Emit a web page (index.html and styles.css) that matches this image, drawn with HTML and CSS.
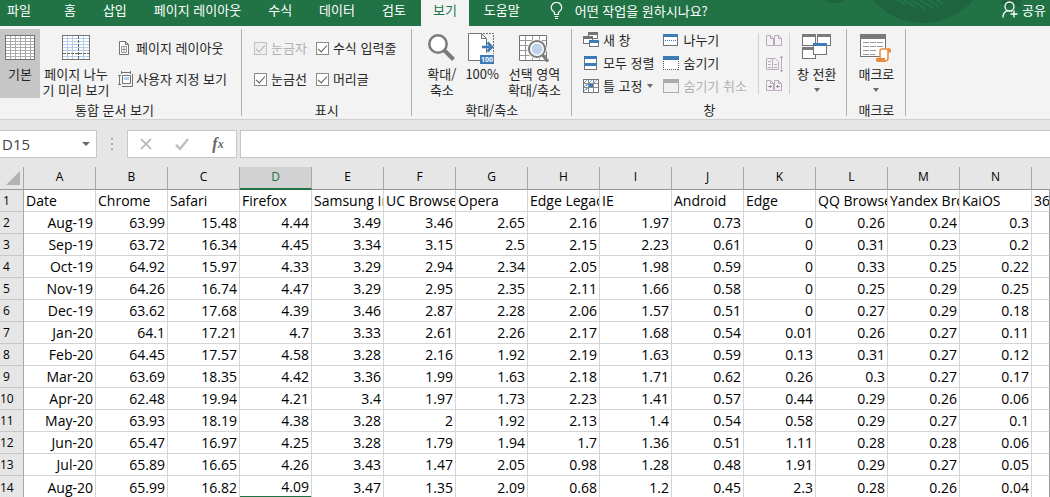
FILE: index.html
```html
<!DOCTYPE html>
<html lang="ko">
<head>
<meta charset="utf-8">
<title>보기</title>
<link rel="stylesheet" href="styles.css">
</head>
<body>
<header class="tabbar">
  <svg class="tabbar-art" width="250" height="26" viewBox="0 0 250 26" aria-hidden="true">
    <g fill="#1e643e"><circle cx="34" cy="-15" r="18"/><circle cx="123" cy="-43" r="66"/><path d="M199 3l4-3h20l-4 3 3 3-4 2-5-5-6 4z"/></g>
    <path d="M97 0l9 4M104 0l11 7M111 0l15 9M120 0l13 8M129 0l9 6M137 0l6 4" stroke="#217346" stroke-width="2.500"/>
  </svg>
  <nav class="tabs">
    <button class="tab first">파일</button>
    <button class="tab">홈</button>
    <button class="tab">삽입</button>
    <button class="tab">페이지 레이아웃</button>
    <button class="tab">수식</button>
    <button class="tab">데이터</button>
    <button class="tab">검토</button>
    <button class="tab selected">보기</button>
    <button class="tab">도움말</button>
  </nav>
  <button class="tell">
    <svg width="13" height="18" viewBox="0 0 13 18" fill="none" stroke="#fff" stroke-width="1.2"><path d="M4.5 12.5v-2C3 9 1.200 8 1.200 5.700a5.200 5.200 0 0 1 10.500 0C11.700 8 10 9 8.500 10.500v2zM4.500 14.500h4M5 16.500h3"/></svg>
    <span>어떤 작업을 원하시나요?</span>
  </button>
  <button class="share">
    <svg width="16" height="18" viewBox="0 0 16 18" fill="none" stroke="#fff" stroke-width="1.3"><circle cx="7.500" cy="5.500" r="4.500"/><path d="M1 16.500c0-4 2-6 4.500-6.800M9 9.500l1.500 1M12 9.500v7M8.500 13h7"/></svg>
    <span>공유</span>
  </button>
</header>

<section class="ribbon">
  <div class="group">
    <div class="tools views">
      <button class="big pressed">
        <svg width="30" height="32" viewBox="0 -1 30 32" shape-rendering="crispEdges"><path fill="#fff" stroke="#737373" d="M.5.500h29v24h-29z"/><path stroke="#ababab" d="M1 3.500h28M1 6.500h28M1 9.500h28M1 12.500h28M1 15.500h28M1 18.500h28M1 21.500h28M5.500 1v23M10.500 1v23M15.500 1v23M20.500 1v23M25.500 1v23"/></svg>
        <span>기본</span>
      </button>
      <button class="big breaks">
        <svg width="28" height="32" viewBox="0 -1 28 32" shape-rendering="crispEdges"><path fill="#fff" stroke="#737373" d="M.5.500h27v24h-27z"/><path stroke="#b4cde8" d="M1 3.500h26M1 6.500h26M1 9.500h26M1 12.500h26M1 15.500h26M1 21.500h26M5.500 1v23M10.500 1v23M21.500 1v23"/><path stroke="#666" stroke-dasharray="3 1" d="M1 18.500h26M16.500 1v23"/></svg>
        <span>페이지 나누<br>기 미리 보기</span>
      </button>
      <div class="stack two">
        <button class="small"><svg width="16" height="16" viewBox="0 0 16 16" fill="#fff" stroke="#737373"><path d="M1.500 1.500h6l3 3v10h-9zM7.500 1.500v3h3"/><path stroke="#999" d="M3.500 6.500h5v6h-5zM6 6.500v6M3.500 9.500h5"/></svg><span>페이지 레이아웃</span></button>
        <button class="small"><svg width="16" height="16" viewBox="0 0 16 16" fill="none" stroke="#737373"><path fill="#fff" d="M4.500 4.500h8v8h-8z"/><path d="M3 1.500h10M3.500 0v3M12.500 0v3M0 4.500h3M0 13.500h3M1.500 4.500v9M14.500 3v12.500H4"/><path fill="#b4cde8" stroke="none" d="M6 6h5v3H6z"/></svg><span>사용자 지정 보기</span></button>
      </div>
    </div>
    <div class="group-name views-name">통합 문서 보기</div>
  </div>

  <div class="group">
    <div class="tools checks">
      <label class="check off"><input type="checkbox" checked disabled><span>눈금자</span></label>
      <label class="check"><input type="checkbox" checked><span>수식 입력줄</span></label>
      <label class="check"><input type="checkbox" checked><span>눈금선</span></label>
      <label class="check"><input type="checkbox" checked><span>머리글</span></label>
    </div>
    <div class="group-name">표시</div>
  </div>

  <div class="group">
    <div class="tools zooms">
      <button class="big">
        <svg width="28" height="32" viewBox="0 0 28 32" fill="none" stroke="#7a7a7a"><circle cx="10" cy="10" r="8.700" fill="#fff" stroke-width="2.500"/><path d="M16.500 16.500l9 9" stroke-width="4"/></svg>
        <span>확대/<br>축소</span>
      </button>
      <button class="big">
        <svg width="28" height="32" viewBox="1 2 28 32" fill="none"><path fill="#fff" stroke="#737373" d="M13 28.500H1.500v-27h13l5 5V21M14.500 1.500v5h5"/><path stroke="#737373" stroke-dasharray="2 1" d="M16 1.500h10.500V22"/><path stroke="#3d7ab8" stroke-width="2.500" d="M15 15h9M20.500 10.500l4.500 4.500-4.500 4.500"/><path fill="#3d7ab8" d="M13 23h14v9H13z"/><text class="badge" x="20" y="30">100</text></svg>
        <span>100%</span>
      </button>
      <button class="big">
        <svg width="30" height="32" viewBox="0 -1 30 32" fill="none"><path fill="#fff" stroke="#737373" d="M.5.500h27v25H.5z"/><path stroke="#999" d="M1 5.500h26M1 10.500h26M1 15.500h26M1 20.500h26M6.500 1v24M13.500 1v24M20.500 1v24"/><circle cx="18" cy="14" r="10" fill="#f2f2f2"/><circle cx="18" cy="14" r="8" fill="#fff" stroke="#7a7a7a" stroke-width="2"/><circle cx="18" cy="14" r="5.500" fill="#bdd3ec"/><path d="M23.500 20l5.500 6.500" stroke="#7a7a7a" stroke-width="3"/></svg>
        <span>선택 영역<br>확대/축소</span>
      </button>
    </div>
    <div class="group-name">확대/축소</div>
  </div>

  <div class="group">
    <div class="tools windows">
      <div class="stack">
        <button class="small"><svg width="16" height="16" viewBox="0 0 16 16" shape-rendering="crispEdges"><path fill="#fff" stroke="#737373" d="M5.500.500h9v6h-9z"/><path fill="#737373" d="M5 0h10v3H5z"/><path fill="#fff" stroke="#737373" d="M.5 5.500h9v6h-9z"/><path fill="#737373" d="M0 4h10v3H0z"/><path fill="#fff" stroke="#737373" d="M6.500 8.500h9v6h-9z"/><path fill="#3d7ab8" d="M6 8h10v3H6z"/></svg><span>새 창</span></button>
        <button class="small"><svg width="16" height="16" viewBox="0 0 16 16" shape-rendering="crispEdges"><path fill="#fff" stroke="#737373" d="M1.500 1.500h12v13h-12z"/><path fill="#3d7ab8" d="M1 1h13v3H1zM1 8h13v3H1z"/></svg><span>모두 정렬</span></button>
        <button class="small"><svg width="16" height="16" viewBox="0 0 16 16" shape-rendering="crispEdges"><path fill="#fff" stroke="#737373" d="M.5 1.500h15v13H.5z"/><path stroke="#8a8a8a" d="M1 5.500h14M1 9.500h14M5.500 2v12M10.500 2v12"/><path stroke="#7ba7d6" d="M1 5l3-3M6 5l3-3M11 5l3-3M1 9l4-3M1 13l4-3"/><path fill="#3d7ab8" d="M6 6h4v3H6z"/></svg><span>틀 고정</span><i class="caret"></i></button>
      </div>
      <div class="stack">
        <button class="small"><svg width="16" height="14" viewBox="0 0 16 14" shape-rendering="crispEdges"><path fill="#fff" stroke="#737373" d="M.5 1.500h14v11H.5z"/><path fill="#3d7ab8" d="M0 1h15v3H0z"/><path stroke="#3d7ab8" stroke-dasharray="1 1" d="M2 7.500h11"/></svg><span>나누기</span></button>
        <button class="small"><svg width="16" height="14" viewBox="0 0 16 14" shape-rendering="crispEdges"><path fill="#fff" stroke="#555" stroke-dasharray="1 1" d="M.5 1.500h15v12H.5z"/><path fill="#3d7ab8" d="M0 0h16v4H0z"/></svg><span>숨기기</span></button>
        <button class="small" disabled><svg width="16" height="14" viewBox="0 0 16 14" shape-rendering="crispEdges"><path fill="#f0f0f0" stroke="#ababab" d="M.5 .5h15v13H.5z"/><path fill="#ababab" d="M0 0h16v4H0z"/></svg><span>숨기기 취소</span></button>
      </div>
      <div class="stack narrow">
        <button class="small" disabled aria-label="나란히 보기"><svg width="17" height="16" viewBox="0 0 17 16" fill="#f6eff8" stroke="#b5adb8"><path d="M.5 2.500h4l3 3v7h-7zM8.500 2.500h4l3 3v7h-7zM4.500 2.500v3h3M12.500 2.500v3h3"/></svg></button>
        <button class="small" disabled aria-label="동시 스크롤"><svg width="17" height="16" viewBox="0 0 17 16" fill="#f6eff8" stroke="#b5adb8"><path d="M.5 2.500h6v11h-6zM6.500 2.500h3l3 3v8h-6zM2 5.500h3M2 8.500h3M2 11.500h3M8 8.500h3M8 11.500h3M15.500 0v16M14 2l1.500-2L17 2M14 14l1.500 2 1.500-2"/></svg></button>
        <button class="small" disabled aria-label="창 위치 다시 정렬"><svg width="17" height="16" viewBox="0 0 17 16" fill="#f6eff8" stroke="#b5adb8"><path d="M.5 2.500h4l3 3v7h-7zM8.500 2.500h4l3 3v7h-7zM4.500 2.500v3h3M12.500 2.500v3h3"/><path stroke="#99919c" d="M2 8.500h4M10 8.500h4M4.500 7v3M11.500 7v3"/></svg></button>
      </div>
      <button class="big switch">
        <svg width="30" height="32" viewBox="0 0 30 32" shape-rendering="crispEdges"><path fill="#fff" stroke="#737373" d="M.5.500h13v11H.5zM15.500.500h13v11h-13zM.5 13.500h13v11H.5z"/><path fill="#7a7a7a" d="M0 0h14v3H0zM15 0h14v3H15zM0 13h14v3H0z"/><path fill="#fff" stroke="#737373" d="M11.500 9.500h13v11h-13z"/><path fill="#3d7ab8" d="M11 9h14v3H11z"/></svg>
        <span>창 전환</span><i class="caret"></i>
      </button>
    </div>
    <div class="group-name">창</div>
  </div>

  <div class="group">
    <div class="tools macros">
      <button class="big">
        <svg width="32" height="32" viewBox="0 0 32 32"><g shape-rendering="crispEdges"><path fill="#fff" stroke="#737373" d="M.5.500h25v22H.5z"/><path fill="#7a7a7a" d="M0 0h26v5H0z"/><path stroke="#999" stroke-dasharray="6 1" d="M3 8.500h20M3 12.500h20M3 16.500h14M3 20.500h12"/></g><path fill="#fff" stroke="#ea8a3d" stroke-width="1.500" d="M20 25V17q0-2 2-2h6v9q0 3-3 3h-7"/><path fill="#ea8a3d" d="M28 14q3 0 3 2.500v2h-3zM16 24h9v4h-7q-2 0-2-2z"/></svg>
        <span>매크로</span><i class="caret"></i>
      </button>
    </div>
    <div class="group-name">매크로</div>
  </div>
</section>

<section class="formula-bar">
  <div class="name-box"><input type="text" value="D15" aria-label="이름 상자"><button aria-label="이름 목록"><i class="caret large"></i></button></div>
  <svg class="grip" width="3" height="12" viewBox="0 0 3 12" fill="#ababab"><path d="M0 0h2v2H0zM0 5h2v2H0zM0 10h2v2H0z"/></svg>
  <div class="edit-box">
    <button aria-label="취소"><svg width="14" height="14" viewBox="0 0 14 14" stroke="#c0c0c0" stroke-width="2"><path d="M2 2l10 10M12 2L2 12"/></svg></button>
    <button aria-label="입력"><svg width="14" height="14" viewBox="0 0 14 14" fill="none" stroke="#c0c0c0" stroke-width="2.500"><path d="M1 8l4 4 8-10"/></svg></button>
    <button class="fx" aria-label="함수 삽입">f<sub>x</sub></button>
  </div>
  <input class="formula" type="text" aria-label="수식 입력줄">
</section>

<main class="sheet">
<table class="grid">
<colgroup><col class="c-num"><col class="c"><col class="c"><col class="c"><col class="c"><col class="c"><col class="c"><col class="c"><col class="c"><col class="c"><col class="c"><col class="c"><col class="c"><col class="c"><col class="c"><col></colgroup>
<thead><tr><th class="corner"><svg width="14" height="14" viewBox="0 0 14 14"><path fill="#b2b2b2" d="M14 0v14H0z"/></svg></th><th>A</th><th>B</th><th>C</th><th class="active">D</th><th>E</th><th>F</th><th>G</th><th>H</th><th>I</th><th>J</th><th>K</th><th>L</th><th>M</th><th>N</th><th></th></tr></thead>
<tbody>
<tr class="names"><th>1</th><td>Date</td><td>Chrome</td><td>Safari</td><td>Firefox</td><td>Samsung Internet</td><td>UC Browser</td><td>Opera</td><td>Edge Legacy</td><td>IE</td><td>Android</td><td>Edge</td><td>QQ Browser</td><td>Yandex Browser</td><td>KaiOS</td><td>360 Safe</td></tr>
<tr><th>2</th><td>Aug-19</td><td>63.99</td><td>15.48</td><td>4.44</td><td>3.49</td><td>3.46</td><td>2.65</td><td>2.16</td><td>1.97</td><td>0.73</td><td>0</td><td>0.26</td><td>0.24</td><td>0.3</td><td></td></tr>
<tr><th>3</th><td>Sep-19</td><td>63.72</td><td>16.34</td><td>4.45</td><td>3.34</td><td>3.15</td><td>2.5</td><td>2.15</td><td>2.23</td><td>0.61</td><td>0</td><td>0.31</td><td>0.23</td><td>0.2</td><td></td></tr>
<tr><th>4</th><td>Oct-19</td><td>64.92</td><td>15.97</td><td>4.33</td><td>3.29</td><td>2.94</td><td>2.34</td><td>2.05</td><td>1.98</td><td>0.59</td><td>0</td><td>0.33</td><td>0.25</td><td>0.22</td><td></td></tr>
<tr><th>5</th><td>Nov-19</td><td>64.26</td><td>16.74</td><td>4.47</td><td>3.29</td><td>2.95</td><td>2.35</td><td>2.11</td><td>1.66</td><td>0.58</td><td>0</td><td>0.25</td><td>0.29</td><td>0.25</td><td></td></tr>
<tr><th>6</th><td>Dec-19</td><td>63.62</td><td>17.68</td><td>4.39</td><td>3.46</td><td>2.87</td><td>2.28</td><td>2.06</td><td>1.57</td><td>0.51</td><td>0</td><td>0.27</td><td>0.29</td><td>0.18</td><td></td></tr>
<tr><th>7</th><td>Jan-20</td><td>64.1</td><td>17.21</td><td>4.7</td><td>3.33</td><td>2.61</td><td>2.26</td><td>2.17</td><td>1.68</td><td>0.54</td><td>0.01</td><td>0.26</td><td>0.27</td><td>0.11</td><td></td></tr>
<tr><th>8</th><td>Feb-20</td><td>64.45</td><td>17.57</td><td>4.58</td><td>3.28</td><td>2.16</td><td>1.92</td><td>2.19</td><td>1.63</td><td>0.59</td><td>0.13</td><td>0.31</td><td>0.27</td><td>0.12</td><td></td></tr>
<tr><th>9</th><td>Mar-20</td><td>63.69</td><td>18.35</td><td>4.42</td><td>3.36</td><td>1.99</td><td>1.63</td><td>2.18</td><td>1.71</td><td>0.62</td><td>0.26</td><td>0.3</td><td>0.27</td><td>0.17</td><td></td></tr>
<tr><th>10</th><td>Apr-20</td><td>62.48</td><td>19.94</td><td>4.21</td><td>3.4</td><td>1.97</td><td>1.73</td><td>2.23</td><td>1.41</td><td>0.57</td><td>0.44</td><td>0.29</td><td>0.26</td><td>0.06</td><td></td></tr>
<tr><th>11</th><td>May-20</td><td>63.93</td><td>18.19</td><td>4.38</td><td>3.28</td><td>2</td><td>1.92</td><td>2.13</td><td>1.4</td><td>0.54</td><td>0.58</td><td>0.29</td><td>0.27</td><td>0.1</td><td></td></tr>
<tr><th>12</th><td>Jun-20</td><td>65.47</td><td>16.97</td><td>4.25</td><td>3.28</td><td>1.79</td><td>1.94</td><td>1.7</td><td>1.36</td><td>0.51</td><td>1.11</td><td>0.28</td><td>0.28</td><td>0.06</td><td></td></tr>
<tr><th>13</th><td>Jul-20</td><td>65.89</td><td>16.65</td><td>4.26</td><td>3.43</td><td>1.47</td><td>2.05</td><td>0.98</td><td>1.28</td><td>0.48</td><td>1.91</td><td>0.29</td><td>0.27</td><td>0.05</td><td></td></tr>
<tr><th>14</th><td>Aug-20</td><td>65.99</td><td>16.82</td><td class="above-cursor">4.09</td><td>3.47</td><td>1.35</td><td>2.09</td><td>0.68</td><td>1.2</td><td>0.45</td><td>2.3</td><td>0.28</td><td>0.26</td><td>0.04</td><td></td></tr>
</tbody>
</table>
</main>
</body>
</html>
```
FILE: styles.css
```css
* { box-sizing: border-box; }
body {
  margin: 0;
  background: #e6e6e6;
  color: #262626;
  font: 13px/16px "Noto Sans CJK KR", sans-serif;
  overflow: hidden;
}
button, input { font: inherit; color: inherit; }
button { border: 0; padding: 0; background: none; white-space: nowrap; }
svg { display: block; flex: none; }

.tabbar { position: relative; display: flex; height: 26px; background: #217346; color: #fff; }
.tabbar-art { position: absolute; top: 0; right: 0; }
.tabs { display: flex; gap: 3px; }
.tab { padding: 0 12px 6px; }
.tab.first { padding-left: 7px; padding-right: 18px; }
.tab.selected { background: #f3f3f3; color: #217346; }
.tell { display: flex; align-items: center; gap: 12px; margin-left: 18px; padding-bottom: 4px; }
.share { position: relative; display: flex; align-items: center; gap: 4px; margin-left: auto; padding: 0 4px 6px 0; }

.ribbon { display: flex; background: #f3f3f3; border-bottom: 1px solid #d0d0d0; padding: 3px 0; }
.group {
  display: flex;
  flex-direction: column;
  gap: 6px;
  border-right: 1px solid #b1b1b1;
}
.tools { display: flex; height: 69px; }
.group-name { text-align: center; line-height: 12px; }
.big { display: flex; flex-direction: column; align-items: center; padding: 5px 4px 0; }
.big svg { overflow: visible; }
.big .caret { margin-top: 6px; }
.pressed { width: 40px; background: #c6c6c6; }
.views { gap: 2px; padding-right: 14px; }
.views-name { padding-right: 12px; }
.breaks { padding-left: 0; padding-right: 0; width: 68px; }
.stack { display: flex; flex-direction: column; justify-content: space-between; padding: 3px 0 4px; }
.stack.two { padding: 11px 0 11px 6px; }
.small { display: flex; align-items: center; gap: 4px; }
.two .small { gap: 2px; }
.small:disabled { color: #b1b1b1; }
.caret { border: 3px solid transparent; border-top: 4px solid #6a6a6a; border-bottom: 0; }
.caret.large { border-width: 4px 4px 0; }

.checks {
  display: grid;
  grid-template-columns: auto auto;
  align-content: start;
  gap: 15px 9px;
  padding: 11px 15px 0 12px;
}
.check { display: flex; align-items: center; gap: 4px; }
.check input {
  appearance: none;
  width: 13px;
  height: 13px;
  margin: 0;
  border: 1px solid #8a8a8a;
  background: #fff;
  display: grid;
  place-items: center;
}
.check input::before {
  content: "";
  width: 4px;
  height: 8px;
  margin-bottom: 2px;
  border: solid #555;
  border-width: 0 1px 1px 0;
  transform: rotate(42deg);
}
.check.off { color: #b1b1b1; }
.check.off input { border-color: #c0c0c0; background: #eee; }
.check.off input::before { border-color: #b1b1b1; }

.zooms { gap: 1px; padding: 0 6px 0 11px; }
.badge { font: bold 7px "Open Sans", sans-serif; fill: #fff; text-anchor: middle; }
.windows { gap: 9px; padding: 0 10px 0 11px; }
.narrow { margin: 4px 0 4px 2px; padding: 0 6px 0 7px; border: solid #d0d0d0; border-width: 0 1px; }
.switch { padding: 5px 0 0; margin-left: -2px; }
.macros { justify-content: center; padding: 0 7px; }

.formula-bar { display: flex; align-items: stretch; height: 28px; margin: 10px 0 9px; }
.name-box { display: flex; width: 97px; background: #fff; border: 1px solid #c6c6c6; border-left: 0; }
.name-box input { flex: 1; min-width: 0; border: 0; padding: 0 2px; background: none; color: #444; font: 15px "Open Sans", sans-serif; }
.name-box button { padding: 0 6px; }
.name-box .caret { display: block; }
.grip { align-self: center; margin: 0 13px 0 14px; }
.edit-box { display: flex; width: 110px; background: #fff; border: 1px solid #c6c6c6; margin-right: 3px; }
.edit-box button { flex: 1; display: flex; align-items: center; justify-content: center; }
.edit-box .fx { font: italic bold 16px "Liberation Serif", serif; color: #666; }
.fx sub { font-size: 12px; }
.formula { flex: 1; min-width: 0; background: #fff; border: 1px solid #c6c6c6; border-right: 0; }

.grid { width: 100%; table-layout: fixed; border-collapse: separate; border-spacing: 0; background: #fff; font: 14px/20px "Open Sans", sans-serif; color: #000; }
.c-num { width: 24px; }
.c { width: 72px; }
.grid th { background: #e6e6e6; font-weight: 400; font-size: 12px; padding: 0; border-right: 1px solid #a8a8a8; }
.grid thead th { height: 23px; padding-bottom: 2px; border-bottom: 1px solid #999; }
.grid thead .corner { padding-bottom: 0; }
.grid thead th:last-child { border-right: 0; }
.grid thead .active { background: #d2d2d2; color: #217346; padding-bottom: 1px; border-bottom: 2px solid #217346; }
.corner svg { margin-left: 6px; }
.grid tbody th { padding: 1px 10px 0 0; border-bottom: 1px solid #c6c6c6; }
.grid td {
  height: 22px;
  padding: 1px 2px 0;
  text-align: right;
  white-space: nowrap;
  overflow: hidden;
  border-right: 1px solid #d4d4d4;
  border-bottom: 1px solid #d4d4d4;
}
.grid .names td { text-align: left; }
.grid td:last-child { border-right-color: #999; }
.grid .above-cursor { padding-top: 2px; border-bottom: 3px solid #217346; line-height: 18px; }
```
